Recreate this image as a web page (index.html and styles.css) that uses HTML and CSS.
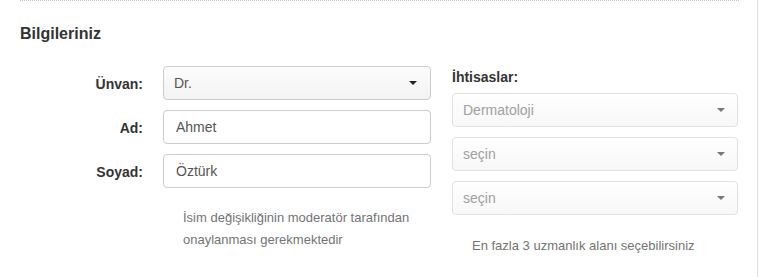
FILE: index.html
```html
<!DOCTYPE html>
<html lang="tr">
<head>
<meta charset="utf-8">
<link rel="stylesheet" href="styles.css">
</head>
<body>
<div class="panel">
  <div class="rule"></div>
  <h3 class="title">Bilgileriniz</h3>
  <div class="form">
    <div class="left">
      <div class="grid">
        <label class="lbl">Ünvan:</label>
        <div class="select main"><span>Dr.</span><i class="caret"></i></div>
        <label class="lbl">Ad:</label>
        <div class="input">Ahmet</div>
        <label class="lbl">Soyad:</label>
        <div class="input">Öztürk</div>
        <div></div>
        <p class="help">İsim değişikliğinin moderatör tarafından onaylanması gerekmektedir</p>
      </div>
    </div>
    <div class="right">
      <div class="rlbl">İhtisaslar:</div>
      <div class="select dis"><span>Dermatoloji</span><i class="caret"></i></div>
      <div class="select dis"><span>seçin</span><i class="caret"></i></div>
      <div class="select dis"><span>seçin</span><i class="caret"></i></div>
      <p class="help rhelp">En fazla 3 uzmanlık alanı seçebilirsiniz</p>
    </div>
  </div>
</div>
</body>
</html>
```
FILE: styles.css
```css
html, body {
  margin: 0;
  padding: 0;
  background: #fff;
}
body {
  font-family: "Liberation Sans", Arial, sans-serif;
  font-size: 14px;
  color: #333;
}
.panel {
  width: 719px;
  height: 277px;
  padding: 0 18px 0 20px;
  border-right: 1px solid #e0e0e0;
}
.rule {
  border-top: 1px dotted #c4c4c4;
  height: 0;
}
.title {
  margin: 23px 0 0;
  font-size: 16px;
  line-height: 20px;
  font-weight: bold;
  color: #333;
}
.form {
  display: flex;
  margin-top: 22px;
}
.left {
  width: 411px;
}
.grid {
  display: grid;
  grid-template-columns: 123px 268px;
  column-gap: 20px;
  row-gap: 10px;
}
.lbl {
  text-align: right;
  font-weight: bold;
  padding-top: 8px;
  line-height: 20px;
}
.input, .select {
  box-sizing: border-box;
  height: 34px;
  border: 1px solid #ccc;
  border-radius: 4px;
  padding: 6px 12px;
  line-height: 20px;
  color: #555;
}
.select {
  display: flex;
  align-items: center;
  justify-content: space-between;
  padding: 6px 13px 6px 10px;
}
.select.main {
  background: linear-gradient(#fcfcfc, #f3f3f3);
  border-color: #ccc;
}
.caret {
  display: block;
  width: 0;
  height: 0;
  border-top: 4px solid #222;
  border-left: 4px solid transparent;
  border-right: 4px solid transparent;
}
.right {
  margin-left: 21px;
  width: 286px;
}
.rlbl {
  font-weight: bold;
  line-height: 20px;
  margin: 1px 0 6px;
}
.select.dis {
  background: linear-gradient(#ffffff, #f7f7f7);
  border-color: #e2e2e2;
  color: #a0a0a0;
  margin-bottom: 10px;
  padding-right: 12px;
}
.select.dis .caret {
  border-top-color: #777;
}
.help {
  margin: 9px 0 0;
  padding-left: 20px;
  font-size: 13px;
  line-height: 22px;
  color: #737373;
}
.rhelp {
  margin-top: 20px;
}
```
